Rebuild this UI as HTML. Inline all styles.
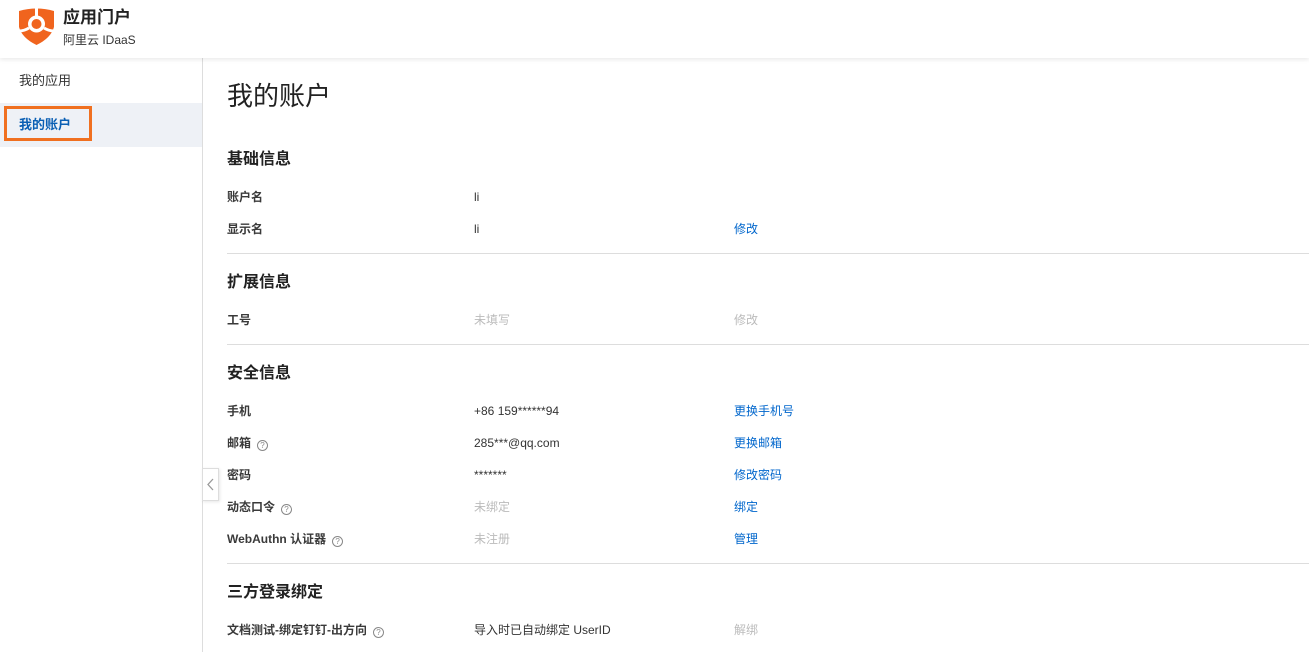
<!DOCTYPE html>
<html><head><meta charset="utf-8"><style>
*{margin:0;padding:0;box-sizing:border-box}
body{width:1309px;height:652px;overflow:hidden;background:#fff;font-family:"Liberation Sans","Noto Sans CJK SC",sans-serif;color:#333;position:relative}
.hdr{position:absolute;left:0;top:0;width:1309px;height:58px;background:#fff;box-shadow:0 2px 4px rgba(0,0,0,.08);z-index:2}
.side{position:absolute;left:0;top:58px;width:203px;height:594px;border-right:1px solid #ddd}
.t{position:absolute;white-space:nowrap;font-size:12px;line-height:14px}
.lb{font-weight:bold;color:#3a3a3a}
.v{color:#333}
.g{color:#bbb}
.a{color:#0066cc}
.h{font-size:16px;font-weight:bold;color:#222;line-height:18px}
.hr{position:absolute;left:227px;right:0;height:1px;background:#ddd}
.q{display:inline-block;width:11px;height:11px;border:1px solid #888;border-radius:50%;font-size:8px;line-height:9px;text-align:center;color:#888;margin-left:6px;vertical-align:-1px;font-weight:normal}
</style></head><body>
<div class="hdr">
<svg style="position:absolute;left:19px;top:7px" width="35" height="38" viewBox="0 0 35 38">
<path d="M0 4 Q17.5 -1 35 4 L35 20 Q32 31 17.5 38 Q3 31 0 20 Z" fill="#f0641e"/>
<circle cx="17.5" cy="17" r="8.5" fill="#fff"/>
<circle cx="17.5" cy="17" r="5" fill="#f0641e"/>
<path d="M17.5 0 L17.5 9" stroke="#fff" stroke-width="3"/>
<path d="M10 21 Q5 24 0 24" stroke="#fff" stroke-width="3" fill="none"/>
<path d="M25 21 Q30 24 35 24" stroke="#fff" stroke-width="3" fill="none"/>
</svg>
<div class="t" style="left:63px;top:8px;font-size:17px;line-height:20px;font-weight:bold;color:#222">应用门户</div>
<div class="t" style="left:63px;top:33px;font-size:12px;color:#333">阿里云 IDaaS</div>
</div>
<div class="side">
<div class="t" style="left:19px;top:16px;font-size:13px">我的应用</div>
<div style="position:absolute;left:0;top:45px;width:202px;height:44px;background:#eef1f6"></div>
<div style="position:absolute;left:4px;top:48px;width:88px;height:35px;border:3px solid #f07020"></div>
<div class="t" style="left:19px;top:60px;font-size:13px;font-weight:bold;color:#0a5fb4">我的账户</div>
</div>
<div style="position:absolute;left:202px;top:468px;width:17px;height:33px;background:#fff;border:1px solid #ddd;box-shadow:1px 1px 3px rgba(0,0,0,.1)"><svg width="15" height="31" viewBox="0 0 15 31"><path d="M10 10 L5 15.5 L10 21" stroke="#999" stroke-width="1.3" fill="none"/></svg></div>
<div class="t" style="left:227px;top:81px;font-size:26px;line-height:30px;color:#222">我的账户</div>

<div class="t h" style="left:227px;top:151px">基础信息</div>
<div class="t lb" style="left:227px;top:190px">账户名</div><div class="t v" style="left:474px;top:190px">li</div>
<div class="t lb" style="left:227px;top:222px">显示名</div><div class="t v" style="left:474px;top:222px">li</div><div class="t a" style="left:734px;top:222px">修改</div>
<div class="hr" style="top:253px"></div>

<div class="t h" style="left:227px;top:274px">扩展信息</div>
<div class="t lb" style="left:227px;top:313px">工号</div><div class="t g" style="left:474px;top:313px">未填写</div><div class="t g" style="left:734px;top:313px">修改</div>
<div class="hr" style="top:344px"></div>

<div class="t h" style="left:227px;top:365px">安全信息</div>
<div class="t lb" style="left:227px;top:404px">手机</div><div class="t v" style="left:474px;top:404px">+86 159******94</div><div class="t a" style="left:734px;top:404px">更换手机号</div>
<div class="t lb" style="left:227px;top:436px">邮箱<span class="q">?</span></div><div class="t v" style="left:474px;top:436px">285***@qq.com</div><div class="t a" style="left:734px;top:436px">更换邮箱</div>
<div class="t lb" style="left:227px;top:468px">密码</div><div class="t v" style="left:474px;top:468px">*******</div><div class="t a" style="left:734px;top:468px">修改密码</div>
<div class="t lb" style="left:227px;top:500px">动态口令<span class="q">?</span></div><div class="t g" style="left:474px;top:500px">未绑定</div><div class="t a" style="left:734px;top:500px">绑定</div>
<div class="t lb" style="left:227px;top:532px">WebAuthn 认证器<span class="q">?</span></div><div class="t g" style="left:474px;top:532px">未注册</div><div class="t a" style="left:734px;top:532px">管理</div>
<div class="hr" style="top:563px"></div>

<div class="t h" style="left:227px;top:584px">三方登录绑定</div>
<div class="t lb" style="left:227px;top:623px">文档测试-绑定钉钉-出方向<span class="q">?</span></div><div class="t v" style="left:474px;top:623px">导入时已自动绑定 UserID</div><div class="t g" style="left:734px;top:623px">解绑</div>
</body></html>
